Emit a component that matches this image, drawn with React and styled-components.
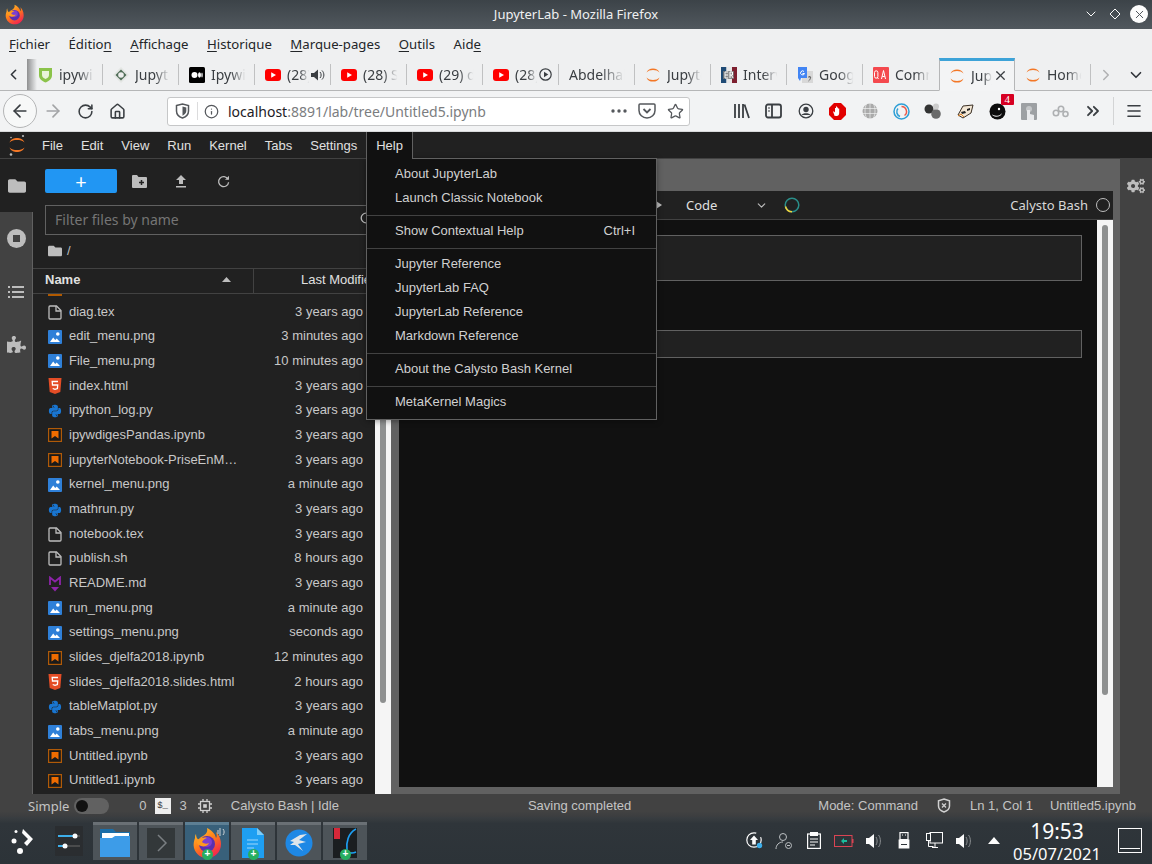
import React from 'react';
import styled, { createGlobalStyle } from 'styled-components';
import { ArrowLeft, ArrowRight, RotateCw, Home, Info, Star, X, ChevronLeft, ChevronRight, ChevronDown, Menu as MenuIcon, ChevronsRight } from 'lucide-react';
import { FaFolder, FaPuzzlePiece, FaCogs, FaPython } from 'react-icons/fa';

const Global = createGlobalStyle`
  html, body { margin: 0; padding: 0; background: #212121; }
  * { box-sizing: border-box; }
`;
const NOTO = `"Noto Sans", sans-serif`;
const ARIAL = `"Liberation Sans", Arial, sans-serif`;

const Page = styled.div`width:1152px;height:864px;overflow:hidden;position:relative;display:flex;flex-direction:column;font-family:${NOTO};`;

/* Firefox chrome */
const TitleBar = styled.div`height:29px;flex:none;background:linear-gradient(#3c4348,#51585e);display:flex;align-items:center;justify-content:center;position:relative;color:#eff0f1;font-size:13px;padding-bottom:1px;`;
const AppLogo = styled.span`position:absolute;left:4px;top:4px;width:21px;height:21px;display:block;`;
const WinButtons = styled.div`position:absolute;right:4px;top:3px;display:flex;align-items:center;gap:6px;`;
const WinBtn = styled.span`width:18px;height:22px;display:flex;align-items:center;justify-content:center;color:#fcfcfc;`;
const WinClose = styled.span`width:18px;height:18px;border-radius:50%;background:#fcfcfc;color:#4d5359;display:flex;align-items:center;justify-content:center;`;

const MenuBar = styled.div`height:30px;flex:none;background:#eff0f1;display:flex;align-items:center;gap:18.5px;padding:0 0 0 9px;color:#232629;font-size:13.2px;`;
const U = styled.span`text-decoration:underline;text-underline-offset:2px;`;

const TabStrip = styled.div`height:32px;flex:none;background:#eff0f1;border-bottom:1px solid #b5b6b7;display:flex;align-items:stretch;position:relative;`;
const TabScroll = styled.div`width:27px;flex:none;display:flex;align-items:center;justify-content:center;color:#30343a;position:relative;
  &::after{content:"";position:absolute;right:-10px;top:0;bottom:0;width:10px;background:linear-gradient(90deg,#8e8f90,#eff0f1);}`;
const Tab = styled.div`width:76px;flex:none;display:flex;align-items:center;gap:6px;padding:0 8px 0 10px;font-size:14px;color:#3a3e42;position:relative;margin-top:${p=>p.$active?'-1px':'0'};
  ${p=>p.$active?`background:#f3f4f5;border:1px solid #b5b6b7;border-top:3px solid #3da3d8;border-bottom:1px solid #f3f4f5;margin-bottom:-1px;padding-left:9px;`:''}
  ${p=>p.$sep?`&::after{content:"";position:absolute;right:0;top:5px;bottom:5px;width:1px;background:#c0c1c2;}`:''}`;
const TabIcon = styled.span`width:16px;height:16px;flex:none;display:flex;align-items:center;justify-content:center;`;
const TabLabel = styled.span`flex:1;min-width:0;overflow:hidden;white-space:nowrap;-webkit-mask-image:linear-gradient(90deg,#000 55%,transparent 96%);mask-image:linear-gradient(90deg,#000 55%,transparent 96%);`;
const TabAction = styled.span`width:15px;flex:none;margin-right:-2px;margin-left:-6px;display:flex;align-items:center;justify-content:center;color:#3a3e42;`;
const StripEnd = styled.div`flex:1;display:flex;align-items:center;color:#b0b1b2;padding-left:6px;`;
const StripDown = styled.div`width:32px;display:flex;align-items:center;justify-content:center;color:#30343a;`;

const NavBar = styled.div`height:41px;flex:none;background:#f2f3f4;border-bottom:1px solid #d8d9da;display:flex;align-items:center;padding:0 0 0 3px;color:#3a3e42;`;
const BackBtn = styled.div`width:34px;height:34px;border-radius:50%;border:1px solid #b4b5b6;background:#f7f8f8;display:flex;align-items:center;justify-content:center;`;
const NavBtn = styled.div`width:32px;height:32px;display:flex;align-items:center;justify-content:center;color:${p=>p.$dim?'#a3a4a6':'#3a3e42'};`;
const UrlBar = styled.div`width:523px;height:29px;margin-left:34px;background:#fff;border:1px solid #c6c7c8;border-radius:3px;display:flex;align-items:center;font-size:14px;color:#7b7d80;`;
const UrlSlot = styled.span`width:${p=>p.$w||28}px;height:100%;flex:none;display:flex;align-items:center;justify-content:center;color:#55585c;${p=>p.$sep?'border-right:1px solid #dcdcdd;height:18px;':''}`;
const UrlText = styled.span`flex:1;white-space:nowrap;padding-left:3px;b{font-weight:400;color:#1d2024;}`;
const ToolIcons = styled.div`display:flex;align-items:center;margin-left:36px;flex:1;`;
const ToolSlot = styled.span`width:31.9px;height:24px;flex:none;display:flex;align-items:center;justify-content:center;position:relative;color:#3a3e42;`;
const Badge = styled.span`position:absolute;top:-5px;right:-1px;background:#d70022;color:#fff;font:11px/11px "Liberation Serif",serif;padding:0 4px;border-radius:1px;`;
const ToolSep = styled.span`width:1px;height:28px;background:#d3d4d5;margin:0 4px 0 4px;`;

/* Jupyter */
const JTop = styled.div`height:27px;flex:none;background:#212121;border-bottom:1px solid #424242;display:flex;align-items:stretch;font:13px ${ARIAL};color:#e0e0e0;`;
const JLogo = styled.div`width:33px;display:flex;align-items:center;justify-content:center;`;
const JMenuItem = styled.div`padding:0 9px;display:flex;align-items:center;${p=>p.$open?'background:#111;border:1px solid #616161;border-width:0 1px;margin-bottom:-1px;position:relative;z-index:6;':''}`;
const Body = styled.div`flex:1;min-height:0;display:flex;background:#616161;`;
const SideBar = styled.div`width:33px;flex:none;background:#424242;border-right:1px solid #616161;display:flex;flex-direction:column;color:#bdbdbd;`;
const SideItem = styled.div`height:53px;margin-right:${p=>p.$active?'-1px':'0'};background:${p=>p.$active?'#212121':'transparent'};display:flex;align-items:center;justify-content:center;`;
const FilePanel = styled.div`width:342px;flex:none;background:#212121;display:flex;flex-direction:column;overflow:hidden;`;
const FileTools = styled.div`height:46px;flex:none;display:flex;align-items:center;padding:0 0 2px 12px;color:#bdbdbd;`;
const NewBtn = styled.div`width:72px;height:24px;background:#2196f3;border-radius:2px;color:#fff;display:flex;align-items:center;justify-content:center;margin-right:1px;font-size:20px;`;
const FileTool = styled.div`width:42px;display:flex;align-items:center;justify-content:center;`;
const Filter = styled.div`height:30px;flex:none;margin:0 0 0 12px;border:1px solid #616161;display:flex;align-items:center;justify-content:space-between;padding:0 0 2px 9px;font-size:14px;color:#757575;`;
const Crumb = styled.div`height:33px;flex:none;display:flex;align-items:center;gap:5px;padding:0 0 2px 15px;color:#bdbdbd;font:13px ${ARIAL};`;
const ListHead = styled.div`height:26px;flex:none;border:1px solid #424242;border-width:1px 0;display:flex;align-items:center;font:13px ${ARIAL};color:#e0e0e0;`;
const NameCol = styled.div`width:221px;height:100%;flex:none;border-right:1px solid #424242;padding:0 22px 3px 12px;display:flex;align-items:center;justify-content:space-between;font-weight:700;`;
const ModCol = styled.div`flex:1;padding:0 0 3px 47px;white-space:nowrap;overflow:hidden;`;
const Sliver = styled.div`height:4.8px;flex:none;padding:0 0 0 15px;`;
const SliverBar = styled.div`width:14px;height:2px;background:#b25a00;`;
const FileRow = styled.div`height:24.68px;flex:none;display:flex;align-items:center;padding:0 12px 0 15px;font:13px ${ARIAL};color:#c8c8c8;`;
const FileIconBox = styled.span`width:14px;height:16px;flex:none;display:flex;align-items:center;justify-content:center;margin-right:7px;position:relative;top:1px;`;
const FileName = styled.span`width:172px;flex:none;overflow:hidden;white-space:nowrap;text-overflow:ellipsis;`;
const FileDate = styled.span`flex:1;text-align:right;white-space:nowrap;`;
const ScrollTrack = styled.div`width:16px;flex:none;background:#f5f5f5;padding:${p=>p.$top}px 5px 0;`;
const ScrollThumb = styled.div`height:${p=>p.$h}px;background:#8e9090;border-radius:3px;`;
const Main = styled.div`flex:1;min-width:0;display:flex;flex-direction:column;padding:32px 7px 7px 8px;`;
const Notebook = styled.div`flex:1;min-height:0;background:#111;display:flex;flex-direction:column;`;
const NbTools = styled.div`height:29px;flex:none;background:#212121;border-bottom:1px solid #424242;display:flex;align-items:center;padding:0 0 0 257px;color:#e0e0e0;font-size:13px;`;
const PlayMark = styled.span`width:0;height:0;border-left:6px solid #bdbdbd;border-top:4px solid transparent;border-bottom:4px solid transparent;margin-right:24px;`;
const CellType = styled.span`width:69px;flex:none;`;
const NbChevron = styled.span`width:29px;flex:none;color:#bdbdbd;display:flex;align-items:center;`;
const KernelName = styled.span`margin-left:auto;color:#d8d8d8;`;
const KernelDot = styled.span`width:14px;height:14px;border:1.5px solid #bdbdbd;border-radius:50%;margin:0 3px 0 8px;`;
const NbBody = styled.div`flex:1;min-height:0;display:flex;`;
const Cells = styled.div`flex:1;min-width:0;padding:15px 15px 0 50px;display:flex;flex-direction:column;`;
const Cell = styled.div`height:${p=>p.$h}px;margin-bottom:${p=>p.$mb}px;background:#212121;border:1px solid #616161;`;
const RightBar = styled.div`width:32px;flex:none;background:#424242;color:#bdbdbd;display:flex;justify-content:center;padding-top:18px;`;

const Status = styled.div`height:23px;flex:none;background:linear-gradient(#424242 75%,#3b3d3f);display:flex;align-items:center;color:#c4c4c4;font:13px ${ARIAL};position:relative;`;
const StatusItem = styled.span`margin-left:${p=>p.$ml||0}px;white-space:nowrap;flex:none;display:flex;align-items:center;`;
const SimpleLabel = styled.span`font:13px ${NOTO};margin-left:28px;`;
const Toggle = styled.span`width:35px;height:16px;border-radius:8px;background:#616161;margin-left:5px;padding:2px;display:flex;`;
const Knob = styled.span`width:12px;height:12px;border-radius:50%;background:#111;`;
const TermBox = styled.span`width:16px;height:16px;background:#eee;color:#333;font:9px/16px "Liberation Mono",monospace;text-align:center;display:block;`;

/* Taskbar */
const Taskbar = styled.div`height:47px;flex:none;background:linear-gradient(#3a3e41,#2f353a 14%,#2c3338);display:flex;align-items:center;color:#fcfcfc;`;
const StartBtn = styled.div`width:45px;flex:none;display:flex;justify-content:center;`;
const Launcher = styled.div`width:48px;flex:none;display:flex;justify-content:center;`;
const TaskItems = styled.div`display:flex;gap:2px;align-self:flex-end;margin-bottom:4px;`;
const TaskItem = styled.div`width:44px;height:38px;position:relative;background:${p=>p.$active?'#38607a':'#4d5459'};border-top:3px solid ${p=>p.$active?'#5d7f94':'#6a7075'};display:flex;align-items:center;justify-content:center;`;
const PlusDot = styled.span`position:absolute;left:50%;bottom:0;margin-left:-5px;width:11px;height:11px;border-radius:50%;background:#27ae60;color:#fff;font:700 10px/10px ${ARIAL};text-align:center;`;
const AudioMark = styled.span`position:absolute;right:3px;top:1px;opacity:.85;display:flex;`;
const Tray = styled.div`margin-left:auto;display:flex;align-items:center;`;
const TraySlot = styled.span`width:30px;height:30px;flex:none;display:flex;align-items:center;justify-content:center;`;
const Clock = styled.div`width:96px;flex:none;text-align:center;display:flex;flex-direction:column;align-items:center;color:#fcfcfc;`;
const ClockTime = styled.span`font-size:21px;line-height:26px;`;
const ClockDate = styled.span`font-size:16.5px;line-height:19px;`;
const Desktop = styled.span`width:24px;height:25px;border:1px solid #fcfcfc;margin:0 10px 0 13px;display:flex;align-items:flex-end;padding:0 1px 3px;`;
const DesktopLine = styled.span`flex:1;height:1px;background:#fcfcfc;`;

/* Menu overlay */
const Dropdown = styled.div`position:absolute;left:366px;top:158px;width:291px;height:262px;background:#111;border:1px solid #616161;padding:2px 0 0;z-index:5;font:13px ${ARIAL};color:#d0d0d0;box-shadow:0 1px 6px rgba(0,0,0,.4);`;
const DItem = styled.div`height:24px;display:flex;align-items:center;justify-content:space-between;padding:1px 21px 0 28px;`;
const DSep = styled.div`height:1px;background:#424242;margin:6px 0 2px;`;

/* Icons */
const Fox = ({size=21}) => (
  <svg width={size} height={size} viewBox="0 0 32 32">
    <defs><linearGradient id={`fx${size}`} x1="0" y1="0" x2="0.6" y2="1"><stop offset="0" stopColor="#ffcf2e"/><stop offset=".55" stopColor="#ff7b1a"/><stop offset="1" stopColor="#f2284e"/></linearGradient></defs>
    <path d="M4 11C3 14 2 17 3 21c2 7 8 10 13 10 8 0 14-6 14-14 0-6-3-10-5-12 1 3 1 5 0 6-1-5-5-8-9-10 1 4-1 6-4 8C9 10 8 12 8 13 6 12 5 10 5 7 4 8 4 10 4 11z" fill={`url(#fx${size})`}/>
    <circle cx="16" cy="17" r="8" fill="#5b2fb0"/><circle cx="16" cy="15" r="5" fill="#7d3fd0"/>
    <path d="M6 13c3-2 7-3 10-2-3 1-4 2-5 4 2 2 5 2 7 1-1 3-5 4-8 3-3-1-5-3-4-6z" fill="#ff9a1f"/>
  </svg>
);
const JupArcs = () => (
  <svg width="16" height="16" viewBox="0 0 16 16" fill="#f37726">
    <path d="M1.5 5.6C2.6 2.6 5 1.4 8 1.4s5.4 1.2 6.5 4.2C13 3.9 10.7 3.1 8 3.1S3 3.9 1.5 5.6z"/>
    <path d="M1.5 10.4C2.6 13.4 5 14.6 8 14.6s5.4-1.2 6.5-4.2C13 12.1 10.7 12.9 8 12.9S3 12.1 1.5 10.4z"/>
  </svg>
);
const Yt = () => (
  <svg width="16" height="12" viewBox="0 0 16 12"><rect width="16" height="12" rx="3" fill="#f00"/><path d="M6.2 3.2 11 6l-4.8 2.8z" fill="#fff"/></svg>
);
const GreenShield = () => (
  <svg width="15" height="16" viewBox="0 0 15 16"><path d="M1 1h13v7c0 4-3 6-6.500 7.500C4 14 1 12 1 8z" fill="#8bc34a"/><path d="M4 4h7v4c0 2-1.500 3-3.500 4C5.500 11 4 10 4 8z" fill="#e9f4d8"/></svg>
);
const JDiamond = () => (
  <svg width="16" height="16" viewBox="0 0 16 16"><path d="M8 0l8 8-8 8-8-8z" fill="#e4e6e4"/><path d="M8 2.500 13.500 8 8 13.500 2.500 8z" fill="#4f6d57"/><circle cx="8" cy="8" r="2.800" fill="#eee"/></svg>
);
const Med = () => (
  <svg width="16" height="16" viewBox="0 0 16 16"><rect width="16" height="16" rx="1.500" fill="#000"/><circle cx="5.500" cy="8" r="3" fill="#fff"/><ellipse cx="10.500" cy="8" rx="1.500" ry="2.800" fill="#fff"/><ellipse cx="13" cy="8" rx=".7" ry="2.500" fill="#fff"/></svg>
);
const ErIcon = () => (
  <svg width="16" height="16" viewBox="0 0 16 16"><rect width="5.500" height="16" fill="#1e4a75"/><rect x="5.500" width="5.500" height="16" fill="#e8e8e8"/><rect x="11" width="5" height="16" fill="#7d1f2f"/><rect x="2" y="4" width="11" height="8" fill="#777" opacity=".8"/><path d="M4 5h3M4 8h3M4 11h3M4 5v6M9 11V5h2.500v3H9m1.500 0 1.500 3" stroke="#fff" fill="none"/></svg>
);
const GTrans = () => (
  <svg width="16" height="16" viewBox="0 0 16 16"><rect x="5" y="4" width="11" height="12" fill="#d8d8d8"/><path d="M1 0h9v11H4l-1 3-2-3z" fill="#4285f4"/><path d="M7 4.500a2 2 0 1 0 .5 2H5.500" stroke="#fff" fill="none"/><path d="M11 10h3M12.500 9v1M11.500 14c1.500-1 2-2.500 2.200-4" stroke="#666" fill="none"/></svg>
);
const QA = () => (<svg width="16" height="16" viewBox="0 0 16 16"><rect width="16" height="16" rx="1" fill="#f4494e"/><path d="M1.500 5.500a1.700 1.700 0 0 1 3.400 0v4a1.700 1.700 0 0 1-3.400 0zM4 10l1.500 2M8.500 12l2-8.500 2 8.500M9.300 9.500h2.500" stroke="#fff" fill="none" strokeWidth="1"/></svg>);
const Speaker = () => (<svg width="14" height="14" viewBox="0 0 14 14" fill="#3a3e42"><path d="M0 5h3l4-3.500v11L3 9H0z"/><path d="M9 4c1.500 1.500 1.500 4.500 0 6M11 2.500c2.500 2.500 2.500 6.500 0 9" stroke="#3a3e42" fill="none"/></svg>);
const PlayRing = () => (<svg width="13" height="13" viewBox="0 0 13 13"><circle cx="6.500" cy="6.500" r="5.700" fill="none" stroke="#3a3e42" strokeWidth="1.200"/><path d="M5 3.800 9.300 6.500 5 9.200z" fill="#3a3e42"/></svg>);
const UrlShield = () => (<svg width="15" height="16" viewBox="0 0 15 16"><path d="M1.500 2.500 7.500 1l6 1.500V8c0 3.500-3 6-6 7-3-1-6-3.500-6-7z" fill="none" stroke="#55585c" strokeWidth="1.500"/><path d="M7.500 3.500l3.800 1V8c0 2-1.800 3.800-3.800 4.700z" fill="#55585c"/></svg>);
const Pocket = () => (<svg width="18" height="16" viewBox="0 0 18 16"><path d="M2 1h14a1 1 0 0 1 1 1v5.500c0 4-3.500 7.500-8 7.500S1 11.500 1 7.500V2a1 1 0 0 1 1-1z" fill="none" stroke="#55585c" strokeWidth="1.500"/><path d="M5.500 6 9 9.500 12.500 6" fill="none" stroke="#55585c" strokeWidth="1.800"/></svg>);
const Library = () => (<svg width="17" height="16" viewBox="0 0 17 16" fill="none" stroke="#3a3e42" strokeWidth="1.800"><path d="M2 1v14M6 1v14M10 1v14M11.500 1.500 16 15"/></svg>);
const Sidebar = () => (<svg width="17" height="16" viewBox="0 0 17 16"><rect x="1" y="1.500" width="15" height="13" rx="2" fill="none" stroke="#3a3e42" strokeWidth="1.800"/><path d="M7 2v12" stroke="#3a3e42" strokeWidth="1.800"/><path d="M3 5h2M3 8h2" stroke="#3a3e42"/></svg>);
const Account = () => (<svg width="16" height="16" viewBox="0 0 16 16"><circle cx="8" cy="8" r="6.800" fill="none" stroke="#3a3e42" strokeWidth="1.300"/><circle cx="8" cy="6.500" r="2.700" fill="#3a3e42"/><path d="M3.500 12c1-2.500 8-2.500 9 0z" fill="#3a3e42"/></svg>);
const UBlock = () => (<svg width="17" height="17" viewBox="0 0 17 17"><path d="M5 0h7l5 5v7l-5 5H5l-5-5V5z" fill="#e20000"/><path d="M5.500 12.500 4 8.500h1l1 1V5h1v3V3.500h1V8 4.500h1V8 5.500h1.200V10c0 2-1 3-2.500 3s-2-.2-2.700-.5z" fill="#fff"/></svg>);
const Globe = () => (<svg width="16" height="16" viewBox="0 0 16 16" fill="#aaa"><circle cx="8" cy="8" r="7.500"/><path d="M0 5.500h16M0 10.500h16M8 0v16M4.500 1c-2 4-2 10 0 14M11.500 1c2 4 2 10 0 14" stroke="#eff0f1" strokeWidth=".7" fill="none"/></svg>);
const BlueRing = () => (<svg width="17" height="17" viewBox="0 0 17 17"><circle cx="8.500" cy="8.500" r="7.500" fill="none" stroke="#2e9fd6" strokeWidth="1.500"/><path d="M8.500 3.500a5 5 0 0 1 3 9" fill="none" stroke="#e95a4a" strokeWidth="1.500"/><path d="M7 13.500a5 5 0 0 1-2-8" fill="none" stroke="#2e9fd6" strokeWidth="1.500"/></svg>);
const Balls = () => (<svg width="18" height="16" viewBox="0 0 18 16"><circle cx="5" cy="6" r="4.500" fill="#333"/><circle cx="12" cy="11" r="4.800" fill="#6a6a6a"/><circle cx="12" cy="3.500" r="3" fill="#ccc"/></svg>);
const Raccoon = () => (<svg width="17" height="15" viewBox="0 0 17 15"><path d="M1 11 6 2l10-1-2 8-8 5z" fill="#f2e6d4" stroke="#3a2f24"/><path d="M4 8l4-1 1 2-4 1zM10 5l3-1 0 2-3 1z" fill="#222"/><path d="M1 12 4 10 7 13" stroke="#e08020" fill="none"/></svg>);
const BlackBall = () => (<svg width="17" height="17" viewBox="0 0 17 17"><circle cx="8.500" cy="8.500" r="8" fill="#0c0c0c"/><path d="M3.500 12c3 2 7 1.500 9-1" stroke="#fff" fill="none"/><circle cx="10" cy="6" r="1.200" fill="#fff"/></svg>);
const GrayThumb = () => (<svg width="16" height="17" viewBox="0 0 16 17"><rect width="16" height="17" rx="1" fill="#9da0a3"/><circle cx="8" cy="6" r="3" fill="#c4c6c8"/><path d="M6 17V7h3v4l4 1v5z" fill="#e9eaec"/></svg>);
const Gears = () => (<svg width="17" height="14" viewBox="0 0 17 14" fill="none" stroke="#aeb0b2" strokeWidth="1.600"><circle cx="4" cy="9" r="2.700"/><circle cx="9" cy="5" r="2.700"/><circle cx="13.500" cy="10" r="2.500"/></svg>);

const JupLogo = () => (
  <svg width="18" height="24" viewBox="0 0 18 24"><path d="M1.500 9.500C3 6 6 5 9 5s6 1 7.500 4.500C14.500 7.500 12 7 9 7s-5.500.5-7.500 2.500zM1.500 14.500C3 18 6 19 9 19s6-1 7.500-4.500C14.500 16.500 12 17 9 17s-5.500-.5-7.500-2.500z" fill="#f37726"/><circle cx="15" cy="3" r="1.100" fill="#bbb"/><circle cx="3" cy="4.500" r=".8" fill="#bbb"/><circle cx="3" cy="21.500" r="1.300" fill="#bbb"/></svg>
);
const Folder = ({s=14,c='#bdbdbd'}) => <FaFolder size={s} color={c}/>;
const StopRing = () => (<svg width="19" height="19" viewBox="0 0 19 19"><circle cx="9.500" cy="9.500" r="9.500" fill="#bdbdbd"/><rect x="6" y="6" width="7" height="7" fill="#424242"/></svg>);
const ListIco = () => (<svg width="16" height="14" viewBox="0 0 16 14" fill="#bdbdbd"><path d="M0 1h2v2H0zM0 6h2v2H0zM0 11h2v2H0zM4 1h12v2H4zM4 6h12v2H4zM4 11h12v2H4z"/></svg>);
const NewFolder = () => (<svg width="15" height="13" viewBox="0 0 15 13"><path d="M0 1a1 1 0 0 1 1-1h4l1.500 2H14a1 1 0 0 1 1 1v9a1 1 0 0 1-1 1H1a1 1 0 0 1-1-1z" fill="#bdbdbd"/><path d="M9.500 5v5M7 7.500h5" stroke="#212121" strokeWidth="1.500"/></svg>);
const UploadIco = () => (<svg width="12" height="13" viewBox="0 0 12 13" fill="#bdbdbd"><path d="M6 0l5 5H8v4H4V5H1zM1 11h10v1.500H1z"/></svg>);
const Refresh = () => (<svg width="13" height="13" viewBox="0 0 13 13" fill="none" stroke="#bdbdbd" strokeWidth="1.300"><path d="M11 4.200a5 5 0 1 0 .6 3"/><path d="M12 .8v4H8z" fill="#bdbdbd" stroke="none"/></svg>);
const Search = () => (<svg width="14" height="14" viewBox="0 0 14 14" fill="none" stroke="#bdbdbd" strokeWidth="1.300"><circle cx="6" cy="6" r="4.800"/><path d="M9.500 9.500 13 13"/></svg>);

const DocIco = () => (<svg width="14" height="15" viewBox="0 0 14 15" fill="none" stroke="#bdbdbd" strokeWidth="1.300"><path d="M1 2a1 1 0 0 1 1-1h6.500L13 5.500V13a1 1 0 0 1-1 1H2a1 1 0 0 1-1-1z"/><path d="M8 1v5h5"/></svg>);
const PngIco = () => (<svg width="14" height="14" viewBox="0 0 14 14"><rect width="14" height="14" rx="1" fill="#2f80d8"/><path d="M2 12l3.200-4.500 2 2.500 1.500-1.500L12 12z" fill="#fff"/><circle cx="9.800" cy="4" r="1.800" fill="#fff"/></svg>);
const HtmlIco = () => (<svg width="14" height="16" viewBox="0 0 14 16"><path d="M0.500 0h13l-1.200 14L7 16l-5.300-2z" fill="#e44d26"/><path d="M10 3.500H4.200l.3 3.500H9.700l-.3 3.500L7 11.300 4.700 10.500" fill="none" stroke="#fff" strokeWidth="1.300"/></svg>);
const NbIco = () => (<svg width="14" height="14" viewBox="0 0 14 14"><rect x=".6" y=".6" width="12.800" height="12.800" fill="#1a1a1a" stroke="#b05a08" strokeWidth="1.200"/><path d="M3.500 3h7v7.500L7 8l-3.500 2.500z" fill="#ef6c00"/></svg>);
const MdIco = () => (<svg width="14" height="16" viewBox="0 0 14 16" fill="none" stroke="#8e24aa" strokeWidth="1.800"><path d="M2 9V1.500l5 4 5-4V9"/><path d="M3 11h8L7 15.500z" fill="#8e24aa" stroke="none"/></svg>);
const ICONS = { doc: DocIco, png: PngIco, html: HtmlIco, nb: NbIco, md: MdIco, py: () => <FaPython size={14} color="#1976d2"/> };

const Shield = () => (<svg width="14" height="15" viewBox="0 0 14 15"><path d="M7 1l5.500 1.800V8c0 3-2.500 5-5.500 6-3-1-5.500-3-5.500-6V2.800z" fill="none" stroke="#d0d0d0" strokeWidth="1.500"/><path d="M5 5.500l4 4M9 5.500l-4 4" stroke="#d0d0d0" strokeWidth="1.300"/></svg>);
const Chip = () => (<svg width="14" height="14" viewBox="0 0 14 14" fill="none" stroke="#d0d0d0" strokeWidth="1.300"><rect x="2.500" y="2.500" width="9" height="9"/><rect x="5.200" y="5.200" width="3.600" height="3.600" fill="#d0d0d0" stroke="none"/><path d="M5 0v2M9 0v2M5 12v2M9 12v2M0 5h2M0 9h2M12 5h2M12 9h2"/></svg>);

const StartMark = () => (<svg width="26" height="28" viewBox="0 0 26 28" fill="#fcfcfc"><circle cx="4" cy="14" r="2.500"/><circle cx="6" cy="4.500" r="1.500"/><circle cx="10" cy="24" r="3"/><path d="M13 2l10 10-6 7-3-3 4-4-6-6z"/></svg>);
const Sliders = () => (<svg width="28" height="30" viewBox="0 0 28 30"><rect width="28" height="30" fill="#2a2d30"/><path d="M3 10h22M3 20h22" stroke="#555" strokeWidth="1.500"/><path d="M3 10h17M3 20h8" stroke="#3daee9" strokeWidth="2"/><circle cx="20" cy="10" r="2.500" fill="#fcfcfc"/><circle cx="10" cy="20" r="2.500" fill="#fcfcfc"/></svg>);
const FolderApp = () => (<svg width="30" height="32" viewBox="0 0 30 32"><path d="M0 2h13l3 3h14v25H0z" fill="#1b6ea8"/><rect x="2" y="6" width="27" height="6" fill="#fff"/><path d="M0 11h12l3-2h15v21H0z" fill="#3d9ce8"/></svg>);
const TermApp = () => (<svg width="28" height="30" viewBox="0 0 28 30"><rect width="28" height="30" fill="#33383a"/><path d="M11 7l8 8-8 8" fill="none" stroke="#7a7f82" strokeWidth="1.500"/></svg>);
const DocApp = () => (<svg width="22" height="30" viewBox="0 0 22 30"><path d="M0 0h15l7 7v23H0z" fill="#1e9ff2"/><path d="M15 0l7 7h-7z" fill="#7fcdf8"/><path d="M5 12h11M5 16h11M5 20h7" stroke="#9dd8fb" strokeWidth="1.200"/></svg>);
const Swift = () => (<svg width="28" height="28" viewBox="0 0 28 28"><circle cx="14" cy="14" r="13.500" fill="#1e88e5"/><path d="M5 12l10-6 7-1-8 6 7 2-8 2 5 7-8-6-5 0 4-3z" fill="#dfe5ea"/></svg>);
const Kile = () => (<svg width="24" height="30" viewBox="0 0 24 30"><rect width="24" height="30" fill="#1b1e20"/><rect x="1" y="0" width="6" height="11" fill="#d62839"/><path d="M23 1C15 5 13 15 14 22c1 3 5 4 9 2" fill="none" stroke="#1e9ff2" strokeWidth="1.600"/></svg>);

const Updater = () => (<svg width="17" height="17" viewBox="0 0 17 17"><circle cx="8" cy="8" r="7.200" fill="none" stroke="#fcfcfc" strokeWidth="1.200" strokeDasharray="36 6"/><path d="M8 3.500l4 4.500H9.800v4.500H6.200V8H4z" fill="#fcfcfc"/><circle cx="13.500" cy="13.500" r="2.700" fill="#3daee9"/></svg>);
const UserOff = () => (<svg width="18" height="18" viewBox="0 0 18 18" fill="none" stroke="#bcc0c3" strokeWidth="1"><circle cx="8" cy="5" r="3.500"/><path d="M1 17c0-4 3-7 7-7"/><circle cx="13.500" cy="13.500" r="3"/><path d="M12 13.500h3"/></svg>);
const Clip = () => (<svg width="14" height="17" viewBox="0 0 14 17"><rect x=".6" y="2" width="12.800" height="14.400" fill="none" stroke="#fcfcfc" strokeWidth="1.200"/><rect x="3" y="0" width="8" height="4" fill="#fcfcfc"/><path d="M3 7h8M3 10h8M3 13h5" stroke="#fcfcfc"/></svg>);
const Batt = () => (<svg width="20" height="12" viewBox="0 0 20 12"><rect x=".5" y=".5" width="17.500" height="11" fill="none" stroke="#da4453"/><rect x="18" y="4" width="1.500" height="4" fill="#da4453"/><path d="M7 6l3-3v2h3v2h-3v2z" fill="#1abc9c"/></svg>);
const Vol = () => (<svg width="17" height="16" viewBox="0 0 17 16" fill="#fcfcfc"><path d="M0 5h3l5-4v14l-5-4H0z"/><path d="M10 4c1.500 2 1.500 6 0 8M12.500 2c2.500 3 2.500 9 0 12" fill="none" stroke="#8a8e91"/></svg>);
const Usb = () => (<svg width="12" height="17" viewBox="0 0 12 17"><rect x="2" y=".6" width="8" height="7" fill="none" stroke="#fcfcfc" strokeWidth="1.200"/><path d="M4 3h1M7 3h1" stroke="#fcfcfc"/><rect x=".6" y="7.500" width="10.800" height="9" fill="#fcfcfc"/><path d="M3 12.500h6" stroke="#2c3338"/></svg>);
const NetIco = () => (<svg width="17" height="17" viewBox="0 0 17 17" fill="none" stroke="#fcfcfc"><rect x="4" y=".5" width="12.500" height="10.500"/><rect x=".5" y="1.500" width="4" height="7" fill="#2c3338"/><path d="M2.500 8.500v6h5M9 11v4M6 15.500h6"/></svg>);
const Caret = () => (<svg width="12" height="7" viewBox="0 0 12 7"><path d="M6 0l6 7H0z" fill="#fcfcfc"/></svg>);
const AudioSmall = () => (<svg width="9" height="12" viewBox="0 0 9 12" fill="none" stroke="#e8e8e8"><path d="M1 4v4M3 2v8M6 3c1.500 2 1.500 4 0 6"/></svg>);

const Fl = ({ c }) => { const I = ICONS[c]; return <FileIconBox><I/></FileIconBox>; };

const tabs = [
  { i:<GreenShield/>, t:'ipywidgets' }, { i:<JDiamond/>, t:'Jupyter' }, { i:<Med/>, t:'Ipywidgets' },
  { i:<Yt/>, t:'(28)', a:<Speaker/> }, { i:<Yt/>, t:'(28) Some' }, { i:<Yt/>, t:'(29) dev' }, { i:<Yt/>, t:'(28)', a:<PlayRing/> },
  { t:'Abdelhak' }, { i:<JupArcs/>, t:'Jupyter' }, { i:<ErIcon/>, t:'Interview' }, { i:<GTrans/>, t:'Google' }, { i:<QA/>, t:'Comment' },
  { i:<JupArcs/>, t:'Jupyter', active:1, a:<X size={15} strokeWidth={2}/> }, { i:<JupArcs/>, t:'Home' },
];
const files = [
  ['doc','diag.tex','3 years ago'],['png','edit_menu.png','3 minutes ago'],['png','File_menu.png','10 minutes ago'],
  ['html','index.html','3 years ago'],['py','ipython_log.py','3 years ago'],['nb','ipywdigesPandas.ipynb','3 years ago'],
  ['nb','jupyterNotebook-PriseEnMain.ipynb','3 years ago'],['png','kernel_menu.png','a minute ago'],['py','mathrun.py','3 years ago'],
  ['doc','notebook.tex','3 years ago'],['doc','publish.sh','8 hours ago'],['md','README.md','3 years ago'],
  ['png','run_menu.png','a minute ago'],['png','settings_menu.png','seconds ago'],['nb','slides_djelfa2018.ipynb','12 minutes ago'],
  ['html','slides_djelfa2018.slides.html','2 hours ago'],['py','tableMatplot.py','3 years ago'],['png','tabs_menu.png','a minute ago'],
  ['nb','Untitled.ipynb','3 years ago'],['nb','Untitled1.ipynb','3 years ago'],
];
const helpMenu = [
  ['About JupyterLab'],['Launch Classic Notebook'],null,['Show Contextual Help','Ctrl+I'],null,
  ['Jupyter Reference'],['JupyterLab FAQ'],['JupyterLab Reference'],['Markdown Reference'],null,
  ['About the Calysto Bash Kernel'],null,['MetaKernel Magics'],
];

export default function App() {
  return (
    <Page>
      <Global/>
      <TitleBar>
        <AppLogo><Fox/></AppLogo>
        JupyterLab - Mozilla Firefox
        <WinButtons>
          <WinBtn><ChevronDown size={16} strokeWidth={1.5}/></WinBtn>
          <WinBtn><svg width="12" height="12" viewBox="0 0 12 12"><path d="M6 1l5 5-5 5-5-5z" fill="none" stroke="#fcfcfc"/></svg></WinBtn>
          <WinClose><X size={13} strokeWidth={1.8}/></WinClose>
        </WinButtons>
      </TitleBar>
      <MenuBar>
        <span><U>F</U>ichier</span><span>Éditio<U>n</U></span><span><U>A</U>ffichage</span><span><U>H</U>istorique</span>
        <span><U>M</U>arque-pages</span><span><U>O</U>utils</span><span>Aid<U>e</U></span>
      </MenuBar>
      <TabStrip>
        <TabScroll><ChevronLeft size={17} strokeWidth={2.2}/></TabScroll>
        {tabs.map((t, i) => (
          <Tab key={i} $active={t.active} $sep={!t.active && i !== 11}>
            {t.i && <TabIcon>{t.i}</TabIcon>}
            <TabLabel>{t.t}</TabLabel>
            {t.a && <TabAction>{t.a}</TabAction>}
          </Tab>
        ))}
        <StripEnd><ChevronRight size={18}/></StripEnd>
        <StripDown><ChevronDown size={18} strokeWidth={2.2}/></StripDown>
      </TabStrip>
      <NavBar>
        <BackBtn><ArrowLeft size={20} strokeWidth={2}/></BackBtn>
        <NavBtn $dim><ArrowRight size={20} strokeWidth={2}/></NavBtn>
        <NavBtn><RotateCw size={17} strokeWidth={2.2}/></NavBtn>
        <NavBtn><Home size={17} strokeWidth={2.2}/></NavBtn>
        <UrlBar>
          <UrlSlot $w={30} $sep><UrlShield/></UrlSlot>
          <UrlSlot $w={27}><Info size={15}/></UrlSlot>
          <UrlText><b>localhost</b>:8891/lab/tree/Untitled5.ipynb</UrlText>
          <UrlSlot $w={28}><svg width="16" height="4" viewBox="0 0 16 4" fill="#55585c"><circle cx="2" cy="2" r="1.700"/><circle cx="8" cy="2" r="1.700"/><circle cx="14" cy="2" r="1.700"/></svg></UrlSlot>
          <UrlSlot $w={28}><Pocket/></UrlSlot>
          <UrlSlot $w={28}><Star size={17} strokeWidth={1.8}/></UrlSlot>
        </UrlBar>
        <ToolIcons>
          <ToolSlot><Library/></ToolSlot><ToolSlot><Sidebar/></ToolSlot><ToolSlot><Account/></ToolSlot><ToolSlot><UBlock/></ToolSlot>
          <ToolSlot><Globe/></ToolSlot><ToolSlot><BlueRing/></ToolSlot><ToolSlot><Balls/></ToolSlot><ToolSlot><Raccoon/></ToolSlot>
          <ToolSlot><BlackBall/><Badge>4</Badge></ToolSlot><ToolSlot><GrayThumb/></ToolSlot><ToolSlot><Gears/></ToolSlot>
          <ToolSlot><ChevronsRight size={20} strokeWidth={2.2}/></ToolSlot><ToolSep/>
          <ToolSlot><MenuIcon size={18} strokeWidth={2.2}/></ToolSlot>
        </ToolIcons>
      </NavBar>
      <JTop>
        <JLogo><JupLogo/></JLogo>
        {['File','Edit','View','Run','Kernel','Tabs','Settings'].map(m => <JMenuItem key={m}>{m}</JMenuItem>)}
        <JMenuItem $open>Help</JMenuItem>
      </JTop>
      <Body>
        <SideBar>
          <SideItem $active><Folder s={18}/></SideItem>
          <SideItem><StopRing/></SideItem>
          <SideItem><ListIco/></SideItem>
          <SideItem><FaPuzzlePiece size={19}/></SideItem>
        </SideBar>
        <FilePanel>
          <FileTools>
            <NewBtn>+</NewBtn>
            <FileTool><NewFolder/></FileTool>
            <FileTool><UploadIco/></FileTool>
            <FileTool><Refresh/></FileTool>
          </FileTools>
          <Filter>Filter files by name<Search/></Filter>
          <Crumb><Folder s={14}/>/</Crumb>
          <ListHead>
            <NameCol>Name<svg width="9" height="5" viewBox="0 0 9 5"><path d="M4.500 0 9 5H0z" fill="#bdbdbd"/></svg></NameCol>
            <ModCol>Last Modified</ModCol>
          </ListHead>
          <Sliver><SliverBar/></Sliver>
          {files.map(f => (
            <FileRow key={f[1]}><Fl c={f[0]}/><FileName>{f[1]}</FileName><FileDate>{f[2]}</FileDate></FileRow>
          ))}
        </FilePanel>
        <ScrollTrack $top={0}><ScrollThumb $h={544}/></ScrollTrack>
        <Main>
          <Notebook>
            <NbTools>
              <PlayMark/>
              <CellType>Code</CellType>
              <NbChevron><ChevronDown size={13} strokeWidth={2}/></NbChevron>
              <svg width="16" height="16" viewBox="0 0 16 16"><circle cx="8" cy="8" r="6.800" fill="none" stroke="#2a8f8a" strokeWidth="1.500"/><path d="M1.500 9.500A6.800 6.800 0 0 0 8 14.800" fill="none" stroke="#f2d43a" strokeWidth="1.500"/></svg>
              <KernelName>Calysto Bash</KernelName>
              <KernelDot/>
            </NbTools>
            <NbBody>
              <Cells>
                <Cell $h={46} $mb={49}/>
                <Cell $h={28} $mb={0}/>
              </Cells>
              <ScrollTrack $top={5}><ScrollThumb $h={470}/></ScrollTrack>
            </NbBody>
          </Notebook>
        </Main>
        <RightBar><FaCogs size={18}/></RightBar>
      </Body>
      <Status>
        <SimpleLabel>Simple</SimpleLabel>
        <Toggle><Knob/></Toggle>
        <StatusItem $ml={30}>0</StatusItem>
        <StatusItem $ml={8}><TermBox>$_</TermBox></StatusItem>
        <StatusItem $ml={9}>3</StatusItem>
        <StatusItem $ml={11}><Chip/></StatusItem>
        <StatusItem $ml={19}>Calysto Bash | Idle</StatusItem>
        <StatusItem $ml={189}>Saving completed</StatusItem>
        <StatusItem $ml={187}>Mode: Command</StatusItem>
        <StatusItem $ml={19}><Shield/></StatusItem>
        <StatusItem $ml={19}>Ln 1, Col 1</StatusItem>
        <StatusItem $ml={17}>Untitled5.ipynb</StatusItem>
      </Status>
      <Taskbar>
        <StartBtn><StartMark/></StartBtn>
        <Launcher><Sliders/></Launcher>
        <TaskItems>
          <TaskItem><FolderApp/></TaskItem>
          <TaskItem><TermApp/></TaskItem>
          <TaskItem $active><Fox size={32}/><AudioMark><AudioSmall/></AudioMark><PlusDot>+</PlusDot></TaskItem>
          <TaskItem><DocApp/><PlusDot>+</PlusDot></TaskItem>
          <TaskItem><Swift/></TaskItem>
          <TaskItem><Kile/><PlusDot>+</PlusDot></TaskItem>
        </TaskItems>
        <Tray>
          <TraySlot><Updater/></TraySlot><TraySlot><UserOff/></TraySlot><TraySlot><Clip/></TraySlot><TraySlot><Batt/></TraySlot>
          <TraySlot><Vol/></TraySlot><TraySlot><Usb/></TraySlot><TraySlot><NetIco/></TraySlot><TraySlot><Vol/></TraySlot><TraySlot><Caret/></TraySlot>
          <Clock><ClockTime>19:53</ClockTime><ClockDate>05/07/2021</ClockDate></Clock>
          <Desktop><DesktopLine/></Desktop>
        </Tray>
      </Taskbar>
      <Dropdown>
        {helpMenu.map((m, i) => m ? <DItem key={i}><span>{m[0]}</span>{m[1] && <span>{m[1]}</span>}</DItem> : <DSep key={i}/>)}
      </Dropdown>
    </Page>
  );
}
